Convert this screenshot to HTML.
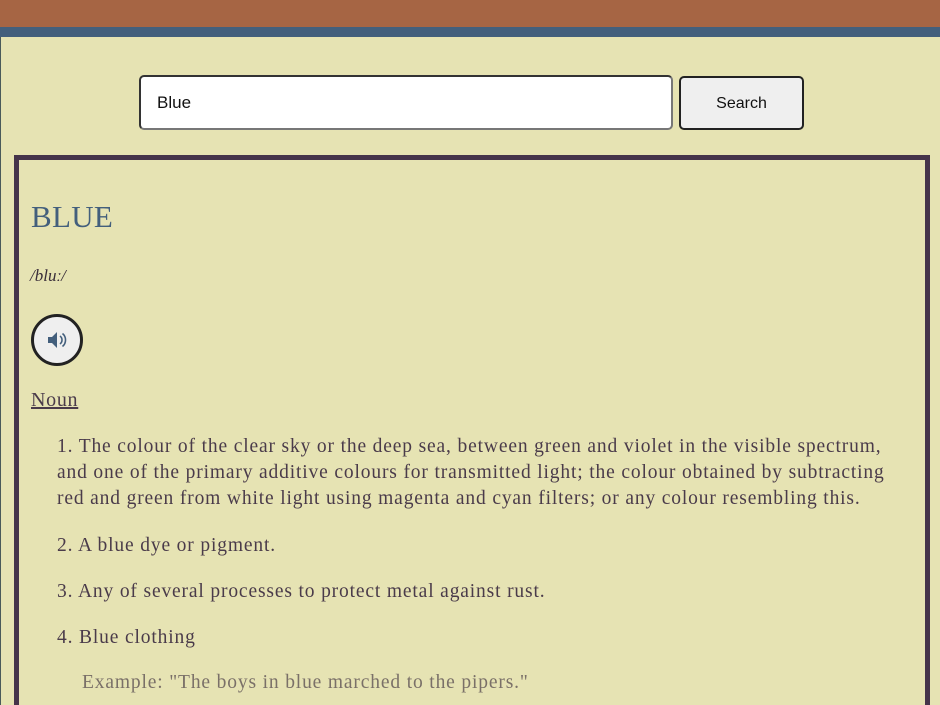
<!DOCTYPE html>
<html><head><style>
html,body{margin:0;padding:0;width:940px;height:705px;overflow:hidden}
body{background:#e6e3b3;position:relative;font-family:"Liberation Serif",serif}
.top{position:absolute;left:0;top:0;width:940px;height:27px;background:#a66544}
.blue{position:absolute;left:0;top:27px;width:940px;height:10px;background:#435f7c}
.ledge{position:absolute;left:0;top:37px;width:1px;height:668px;background:#4a5a5a}
.inp{position:absolute;left:139px;top:75px;width:534px;height:55px;background:#fff;border:2px solid #333;border-right-color:#777;border-bottom-color:#777;border-radius:5px;box-sizing:border-box;font:17px "Liberation Sans",sans-serif;padding:16px 0 0 16px;color:#111}
.btn{position:absolute;left:679px;top:76px;width:125px;height:54px;background:#efefef;border:2px solid #222;border-radius:5px;box-sizing:border-box;font:16px "Liberation Sans",sans-serif;text-align:center;line-height:51px;color:#111}
.box{position:absolute;left:14px;top:155px;width:916px;height:550px;border:5px solid #45344a;border-bottom:none;box-sizing:border-box}
h1{position:absolute;left:31px;top:199px;margin:0;font-weight:normal;font-size:31px;letter-spacing:0.3px;color:#435f7c}
.ph{position:absolute;left:30px;top:266px;font-style:italic;font-size:17px;color:#3a2e3a}
.snd{position:absolute;left:31px;top:314px;width:52px;height:52px;border:3px solid #222;border-radius:50%;box-sizing:border-box;background:#efefef}
.noun{position:absolute;left:31px;top:389px;font-size:20px;letter-spacing:0.7px;color:#4a3b4a;text-decoration:underline}
.d{position:absolute;left:57px;font-size:19.5px;letter-spacing:0.85px;color:#4a3b4a;line-height:26px;width:870px}
.ex{position:absolute;left:82px;top:672px;font-size:19.5px;letter-spacing:0.85px;color:#7a7068}
</style></head><body>
<div class="top"></div><div class="blue"></div><div class="ledge"></div>
<div class="inp">Blue</div>
<div class="btn">Search</div>
<div class="box"></div>
<h1>BLUE</h1>
<div class="ph">/bluː/</div>
<div class="snd"><svg width="46" height="46" viewBox="0 0 46 46"><path d="M14 20h4l5-5v16l-5-5h-4z" fill="#435f7c"/><path d="M26 19a5 5 0 0 1 0 8M28.5 16.5a8.5 8.5 0 0 1 0 13" stroke="#435f7c" stroke-width="1.6" fill="none"/></svg></div>
<div class="noun">Noun</div>
<div class="d" style="top:434px">1. The colour of the clear sky or the deep sea, between green and violet in the visible spectrum,<br>and one of the primary additive colours for transmitted light; the colour obtained by subtracting<br>red and green from white light using magenta and cyan filters; or any colour resembling this.</div>
<div class="d" style="top:533px">2. A blue dye or pigment.</div>
<div class="d" style="top:579px">3. Any of several processes to protect metal against rust.</div>
<div class="d" style="top:625px">4. Blue clothing</div>
<div class="ex">Example: "The boys in blue marched to the pipers."</div>
</body></html>
